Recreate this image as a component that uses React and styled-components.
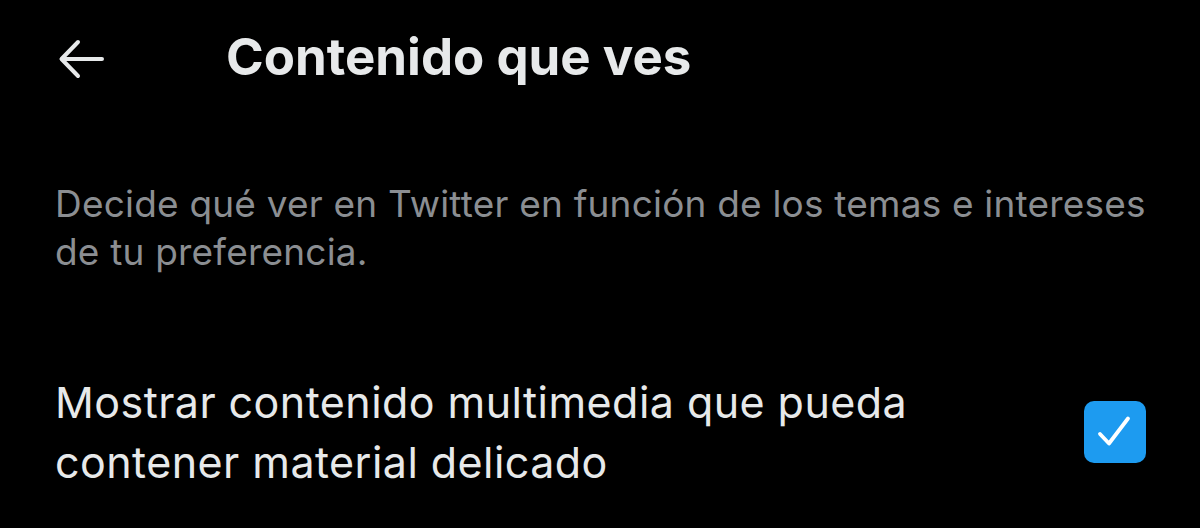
import React from "react";
import styled, { createGlobalStyle } from "styled-components";

const GlobalStyle = createGlobalStyle`
  html, body {
    margin: 0;
    padding: 0;
    background: #000;
  }
  body {
    font-family: Inter, Roboto, "Liberation Sans", sans-serif;
    color: #e7e9ea;
  }
`;

const Screen = styled.div`
  width: 1200px;
  height: 528px;
  background: #000;
  overflow: hidden;
`;

const Header = styled.header`
  display: flex;
  align-items: center;
  height: 118px;
  padding-left: 58px;
`;

const BackButton = styled.button`
  display: flex;
  align-items: center;
  justify-content: center;
  width: 48px;
  height: 48px;
  padding: 0;
  border: 0;
  background: none;
  color: #e7e9ea;
  cursor: pointer;
`;

const Title = styled.h1`
  margin: 0 0 0 120px;
  padding-bottom: 6px;
  font-size: 51px;
  font-weight: 700;
  color: #e7e9ea;
`;

const Description = styled.p`
  margin: 62px 0 0;
  padding: 0 40px 0 55px;
  font-size: 37px;
  line-height: 48px;
  letter-spacing: 0.2px;
  color: #8b8e92;
`;

const OptionRow = styled.label`
  display: flex;
  align-items: center;
  justify-content: space-between;
  margin-top: 96px;
  padding: 0 54px 0 55px;
  cursor: pointer;
`;

const OptionText = styled.span`
  font-size: 43px;
  line-height: 60px;
  letter-spacing: 0.45px;
  color: #e7e9ea;
  max-width: 900px;
`;

const Checkbox = styled.span`
  display: flex;
  align-items: center;
  justify-content: center;
  width: 62px;
  height: 62px;
  border-radius: 10px;
  background: ${(props) => (props.checked ? "#1d9bf0" : "transparent")};
  flex-shrink: 0;
`;

function BackArrow() {
  return (
    <svg width="48" height="40" viewBox="0 0 48 40" fill="none">
      <path
        d="M44 20H4M20 3L3.5 20L20 37"
        stroke="currentColor"
        strokeWidth="4"
        strokeLinecap="round"
        strokeLinejoin="round"
      />
    </svg>
  );
}

function CheckMark() {
  return (
    <svg width="40" height="40" viewBox="0 0 40 40" fill="none">
      <path
        d="M5 22L14 31.5L33 6.5"
        stroke="#fff"
        strokeWidth="3.8"
        strokeLinecap="round"
        strokeLinejoin="round"
      />
    </svg>
  );
}

export default function App() {
  return (
    <Screen>
      <GlobalStyle />
      <Header>
        <BackButton aria-label="Volver">
          <BackArrow />
        </BackButton>
        <Title>Contenido que ves</Title>
      </Header>
      <Description>
        Decide qué ver en Twitter en función de los temas e intereses de tu
        preferencia.
      </Description>
      <OptionRow>
        <OptionText>
          Mostrar contenido multimedia que pueda contener material delicado
        </OptionText>
        <Checkbox checked>
          <CheckMark />
        </Checkbox>
      </OptionRow>
    </Screen>
  );
}
